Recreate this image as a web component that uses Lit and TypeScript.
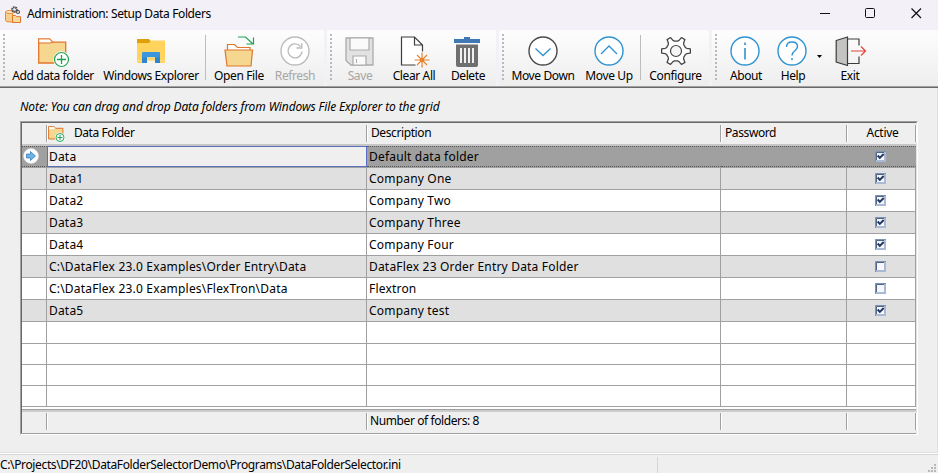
import { LitElement, html, css, svg } from 'lit';
import { customElement } from 'lit/decorators.js';

interface Folder { path: string; description: string; active: boolean; }

const FOLDERS: Folder[] = [
  { path: 'Data', description: 'Default data folder', active: true },
  { path: 'Data1', description: 'Company One', active: true },
  { path: 'Data2', description: 'Company Two', active: true },
  { path: 'Data3', description: 'Company Three', active: true },
  { path: 'Data4', description: 'Company Four', active: true },
  { path: 'C:\\DataFlex 23.0 Examples\\Order Entry\\Data', description: 'DataFlex 23 Order Entry Data Folder', active: false },
  { path: 'C:\\DataFlex 23.0 Examples\\FlexTron\\Data', description: 'Flextron', active: false },
  { path: 'Data5', description: 'Company test', active: true },
];

const plusBadge = svg`<circle cx="23.5" cy="21.5" r="8.2" fill="#fff"/><circle cx="23.5" cy="21.5" r="7" fill="#fff" stroke="#1fa352" stroke-width="1.2"/><path d="M23.5 17v9M19 21.5h9" stroke="#1fa352" stroke-width="1.3"/>`;
const folderBody = svg`<path d="M.7 25V1h11l3 3.200h13V25z" fill="#f5d78f" stroke="#e2762c" stroke-width="1.3"/><path d="M1.300 4.500V1.600h10.200l2.500 2.600-2.500.8z" fill="#fff"/><path d="M1 5h11l3-.8" stroke="#e2762c" fill="none"/>`;
const ring = (c: string) => svg`<circle cx="15" cy="15" r="14" fill="#fff" stroke="${c}" stroke-width="1.400"/>`;

const gearPath = () => {
  const pts: string[] = [];
  for (let i = 0; i < 6; i++) {
    for (const [off, r] of [[-8, 14.500], [8, 14.500], [14, 11], [21, 10], [39, 10], [46, 11]]) {
      const a = ((i * 60 + off) * Math.PI) / 180;
      pts.push(`${(15 + r * Math.cos(a)).toFixed(2)} ${(15 + r * Math.sin(a)).toFixed(2)}`);
    }
  }
  return `M${pts.join('L')}Z`;
};

const ICONS: Record<string, unknown> = {
  add: svg`<g transform="translate(0 2)">${folderBody}${plusBadge}</g>`,
  explorer: svg`<path d="M1 4.500h28v20H1z" fill="#ffd35c"/><path d="M1 3h12l1.500 2L13 7H1z" fill="#dfa00b"/><path d="M1 24.500h5V27H2q-1 0-1-1zM24 24.500h5V26q0 1-1 1h-4z" fill="#ffd35c"/><path d="M6 27V17q0-1 1-1h16q1 0 1 1v10h-5v-5.500h-8V27z" fill="#3a96dd"/><path d="M6 21.500h5V27H6zM19 21.500h5V27h-5z" fill="#2f86d0"/><path d="M11 21.500h8V27h-8z" fill="#f8f2e0"/><path d="M11 21.500h8v3h-8z" fill="#ffd766"/>`,
  open: svg`<path d="M3.500 14V8.500h7l3 3h12.500V14" fill="#fff" stroke="#e2762c" stroke-width="1.200"/><path d="M1 14h27.500l-1.500 16H3z" fill="#f5d78f" stroke="#e2762c" stroke-width="1.200"/><path d="M14 1h7.500l7 6.500M29.500 1.500V8h-7" fill="none" stroke="#1fa352" stroke-width="1.200"/>`,
  refresh: svg`<g>${ring('#bcbcbc')}<path d="M20.500 10.500A7 7 0 1 0 22 15.500M16.500 12h5.200V7.200" fill="none" stroke="#bcbcbc" stroke-width="1.400"/></g>`,
  save: svg`<path d="M1 2h27v27H6l-5-4.500z" fill="#e2e2e2" stroke="#ababab" stroke-width="1.300"/><path d="M5 2h19v12H5zM8 29v-9h13v9z" fill="#fafafa" stroke="#ababab" stroke-width="1.200"/><path d="M11.500 23v4" stroke="#ababab"/>`,
  clear: svg`<path d="M2.500 1h13l8 8v20h-21z" fill="#fff"/><path d="M23.500 15.500V9l-8-8h-13v28h14M15.500 1v8h8" fill="none" stroke="#3c3c3c" stroke-width="1.200"/><path d="M23 16.500v15M15.500 24h15M18 19l10 10M28 19l-10 10" stroke="#e8822d" stroke-width="1.200"/><circle cx="23" cy="24" r="2.300" fill="#e8822d"/>`,
  trash: svg`<path d="M1 3h10V1h6v2h10v4H1z" fill="#3f78b5"/><path d="M3 8.500h22V29q0 2-2 2H5q-2 0-2-2z" fill="#6f6f6f"/><path d="M8 12v15M12 12v15M16 12v15M20 12v15" stroke="#fff" stroke-width="1.800"/>`,
  down: svg`<g>${ring('#4a4a4a')}<path d="M7.500 12.500l7.500 7 7.500-7" fill="none" stroke="#2f93cf" stroke-width="1.300"/></g>`,
  up: svg`<g>${ring('#2f93cf')}<path d="M7 18l8-8 8 8" fill="none" stroke="#2f93cf" stroke-width="1.300"/></g>`,
  gear: svg`<path d="${gearPath()}" fill="#fff" stroke="#454545" stroke-width="1.300" stroke-linejoin="round"/><circle cx="15" cy="15" r="5.500" fill="#f6f6f6" stroke="#454545" stroke-width="1.200"/>`,
  about: svg`<g transform="translate(-1 0)">${ring('#2f93cf')}<path d="M15 12v11.500M15 6.500v2.500" stroke="#2f93cf" stroke-width="1.600"/></g>`,
  help: svg`<g transform="translate(-1 0)">${ring('#2f93cf')}<path d="M9.500 11q0-5 5.500-5t5.500 4.500c0 4.500-5.500 4-5.500 9M15 22v2.200" fill="none" stroke="#2f93cf" stroke-width="1.400"/></g>`,
  exit: svg`<g transform="translate(.5 0)"><path d="M12 3h11.500v6.500M23.500 20.500V27.500H12" fill="none" stroke="#3c3c3c" stroke-width="1.200"/><path d="M.7 4.500L12 1v28.500L.7 26z" fill="#c4c4c2" stroke="#3c3c3c" stroke-width="1.200"/><path d="M15.500 15h14M25.500 10.500l4.500 4.500-4.500 4.500" fill="none" stroke="#e8403c" stroke-width="1.200"/></g>`,
};

interface Tool { icon: string; label: string; w: number; disabled?: boolean; }

const GROUPS: { cls: string; items: (Tool | 'sep')[] }[] = [
  { cls: 'g1', items: [
    { icon: 'add', label: 'Add data folder', w: 92 }, { icon: 'explorer', label: 'Windows Explorer', w: 104 }, 'sep',
    { icon: 'open', label: 'Open File', w: 66 }, { icon: 'refresh', label: 'Refresh', w: 46, disabled: true }] },
  { cls: 'g2', items: [
    { icon: 'save', label: 'Save', w: 46, disabled: true }, { icon: 'clear', label: 'Clear All', w: 62 }, { icon: 'trash', label: 'Delete', w: 46 }] },
  { cls: 'g3', items: [
    { icon: 'down', label: 'Move Down', w: 72 }, { icon: 'up', label: 'Move Up', w: 60 }, 'sep',
    { icon: 'gear', label: 'Configure', w: 71 }] },
  { cls: 'g4', items: [
    { icon: 'about', label: 'About', w: 48 }, { icon: 'help', label: 'Help', w: 46 }, 'sep',
    { icon: 'exit', label: 'Exit', w: 54 }] },
];

@customElement('app-root')
export class AppRoot extends LitElement {
  static styles = css`
    :host { display: flex; flex-direction: column; width: 938px; height: 473px; box-sizing: border-box; overflow: hidden; background: #efefef; color: #000; font: 12px/16px "Noto Sans", "Open Sans", sans-serif; white-space: nowrap; }
    * { box-sizing: border-box; }
    svg { display: block; overflow: visible; flex: none; }
    .title { display: flex; align-items: center; height: 30px; background: #f3f0f7; padding-left: 5px; flex: none; }
    .title span { margin: -2px 0 0 6px; flex: 1; letter-spacing: -.37px; }
    .win { margin: -4px 16px 0 0; }
    .bar { display: flex; gap: 3px; height: 56px; flex: none; background: #f3f1f5; }
    .band { display: flex; height: 56px; background: linear-gradient(#fdfdfd, #eeeeee); border-radius: 2px; padding-left: 3px; }
    .g1 { width: 324px; } .g2 { width: 169px; } .g3 { width: 210px; } .g4 { width: 226px; }
    .grip { width: 2px; height: 46px; margin-top: 4px; background: repeating-linear-gradient(#b9b9b9 0 2px, transparent 2px 4px); flex: none; }
    .g1 .grip { margin-right: 2px; }
    .g2 .grip { margin-right: 5px; } .g3 .grip { margin-right: 3px; } .g4 .grip { margin-right: 5px; }
    .sep { width: 1px; height: 45px; margin-top: 5px; background: #bdbdbd; flex: none; }
    .g1 .sep { margin-left: 2px; }
    .g3 .sep { margin-left: 1px; margin-right: -1px; }
    .tool { display: flex; flex-direction: column; align-items: center; padding-top: 6px; flex: none; letter-spacing: -.38px; }
    .off { color: #a6a6a6; }
    .drop { width: 7px; display: flex; padding: 25px 0 0 1px; flex: none; }
    .rule { height: 2px; background: linear-gradient(#a0a0a0 50%, #696969 50%); flex: none; }
    .main { flex: 1; border-right: 1px solid #e0e0e0; padding: 11px 0 0 20px; }
    .note { font-style: italic; height: 22px; letter-spacing: -.11px; }
    .table { width: 898px; height: 314px; border: 1px solid; border-color: #a0a0a0 #fff #fff #a0a0a0; }
    .inner { height: 312px; border: 1px solid; border-color: #696969 #e3e3e3 #e3e3e3 #696969; background: #fff; }
    .row { display: grid; grid-template-columns: 25px 320px 354px 126px 69px; height: 22px; border-bottom: 1px solid #a0a0a0; letter-spacing: .19px; }
    .row > div { border-right: 1px solid #a0a0a0; padding-left: 2px; line-height: 21px; overflow: hidden; }
    .row > .chk { display: flex; justify-content: center; align-items: center; padding: 0 2px 0 0; }
    .row.short { height: 21px; }
    .alt { background: #e0e0e0; }
    .sel { background: #a0a0a0; }
    .row.sel > div { border-right-color: transparent; border-top: 1px dotted #555; border-bottom: 1px dotted #555; line-height: 19px; }
    .row.sel > .cur { background: #efefef; border: 1px solid #5b6fc0; padding-left: 1px; }
    .row.sel > .mark { padding: 1px 0 0 1px; }
    .head, .foot { display: grid; grid-template-columns: 25px 320px 354px 126px 69px; background: #efefef; }
    .head { height: 23px; padding: 2px 0 4px; box-shadow: inset 0 -2px #c6c6c6; }
    .head > div, .foot > div { border-right: 1px solid #a0a0a0; box-shadow: 1px 0 #fff; line-height: 15px; padding-left: 4px; letter-spacing: -.4px; }
    .head > .df { display: flex; padding-left: 1px; gap: 9px; letter-spacing: -.45px; }
    .head > .ac { text-align: center; padding: 0 0 0 3px; letter-spacing: -.3px; }
    .foot { height: 25px; margin-top: 2px; border-top: 1px solid #a0a0a0; border-bottom: 1px solid #a0a0a0; padding: 3px 0 3px; box-shadow: inset 0 2px #cccccc; }
    .foot > div { padding-left: 3px; line-height: 16px; }
    .status { height: 21px; border-top: 1px solid #e0e0e0; box-shadow: inset 0 1px #fff, inset 0 2px #d6d6d6; display: flex; flex: none; padding-top: 4px; justify-content: space-between; }
    .status span { width: 658px; border-right: 1px solid #d6d6d6; letter-spacing: -.36px; }
  `;

  private icon(name: string) {
    return html`<svg width="30" height="32" viewBox="0 0 30 32">${ICONS[name]}</svg>`;
  }

  private item(t: Tool | 'sep', group: string) {
    if (t === 'sep') {
      return group === 'g4'
        ? html`<div class="drop"><svg width="5" height="3" viewBox="0 0 5 3"><path d="M0 0h5L2.500 3z"/></svg></div>`
        : html`<div class="sep"></div>`;
    }
    return html`<div class="tool ${t.disabled ? 'off' : ''}" style="width:${t.w}px">${this.icon(t.icon)}<span>${t.label}</span></div>`;
  }

  private check(on: boolean) {
    return html`<svg width="11" height="11" viewBox="0 0 11 11"><path d="M0 0h11v11H0z" fill="#a9bad6"/><path d="M.5 11V.5H11" fill="none" stroke="#7d92b4"/><path d="M2 2h7v7H2z" fill="#f6f6fc"/><path d="M1.500 9V1.500H9" fill="none" stroke="#4f6587"/>${on ? svg`<path d="M2.700 4.500l2.100 2.400L8.700 3" fill="none" stroke="#21375c" stroke-width="2"/>` : ''}</svg>`;
  }

  render() {
    return html`
      <div class="title">
        <svg width="16" height="17" viewBox="0 0 16 17"><path d="M.5 5v8.500q0 1.500 5 1.500h2V5z" fill="#f5cf8c" stroke="#e58a3c"/><ellipse cx="5" cy="5" rx="4.500" ry="1.500" fill="#fde9c8" stroke="#e58a3c"/><path d="M7.500 15.500v-7h3l1 1.200h4v5.800z" fill="#f8d99b" stroke="#e2762c"/><circle cx="9.500" cy="2.500" r="2.300" fill="none" stroke="#444" stroke-width="2" stroke-dasharray="1.500 .6"/><circle cx="13" cy="5" r="1.500" fill="none" stroke="#555" stroke-width="1.200"/></svg>
        <span>Administration: Setup Data Folders</span>
        <svg class="win" width="102" height="11" viewBox="0 0 102 11" fill="none" stroke="#111"><path d="M0 5.500h10"/><rect x="45.500" y=".5" width="9" height="9" rx="1"/><path d="M91.500 .5l9.500 9.500M101 .5l-9.500 9.500" stroke-width="1.200"/></svg>
      </div>
      <div class="bar">${GROUPS.map((g) => html`<div class="band ${g.cls}"><div class="grip"></div>${g.items.map((t) => this.item(t, g.cls))}</div>`)}</div>
      <div class="rule"></div>
      <div class="main">
        <div class="note">Note: You can drag and drop Data folders from Windows File Explorer to the grid</div>
        <div class="table"><div class="inner">
          <div class="head">
            <div></div>
            <div class="df"><svg width="17" height="17" viewBox="0 0 17 17"><path d="M.6 14V1.600h5.500l1.500 1.700h7.300V14z" fill="#f5d78f" stroke="#e2762c"/><path d="M1.100 3.700V2.100h4.700l1.200 1.200-1 .9H1.100z" fill="#fff"/><circle cx="12" cy="12.500" r="5" fill="#fff"/><circle cx="12" cy="12.500" r="4" fill="#fff" stroke="#1fa352"/><path d="M12 10v5M9.500 12.500h5" stroke="#1fa352"/></svg>Data Folder</div>
            <div>Description</div><div>Password</div><div class="ac">Active</div>
          </div>
          ${FOLDERS.map((f, i) => html`<div class="row ${i === 0 ? 'sel' : i % 2 ? 'alt' : ''}">
            <div class="mark">${i === 0 ? html`<svg width="16" height="16" viewBox="0 0 16 16"><circle cx="8" cy="8" r="7.500" fill="#fff" stroke="#ddd" stroke-width=".6"/><path d="M3.500 6h4V3.500L12.500 8l-5 4.500V10h-4z" fill="#6cb4e8" stroke="#3f7fb5" stroke-width=".8"/></svg>` : ''}</div>
            <div class="${i === 0 ? 'cur' : ''}">${f.path}</div>
            <div>${f.description}</div><div></div>
            <div class="chk">${this.check(f.active)}</div>
          </div>`)}
          ${[0, 1, 2, 3].map((i) => html`<div class="row ${i ? 'short' : ''}"><div></div><div></div><div></div><div></div><div></div></div>`)}
          <div class="foot"><div></div><div></div><div>Number of folders: 8</div><div></div><div></div></div>
        </div></div>
      </div>
      <div class="status">
        <span>C:\\Projects\\DF20\\DataFolderSelectorDemo\\Programs\\DataFolderSelector.ini</span>
        <svg width="11" height="16" viewBox="0 0 11 16" fill="#b8b8b8"><path d="M7 7h2v2H7zM7 10h2v2H7zM4 10h2v2H4zM7 13h2v2H7zM4 13h2v2H4zM1 13h2v2H1z"/></svg>
      </div>`;
  }
}
